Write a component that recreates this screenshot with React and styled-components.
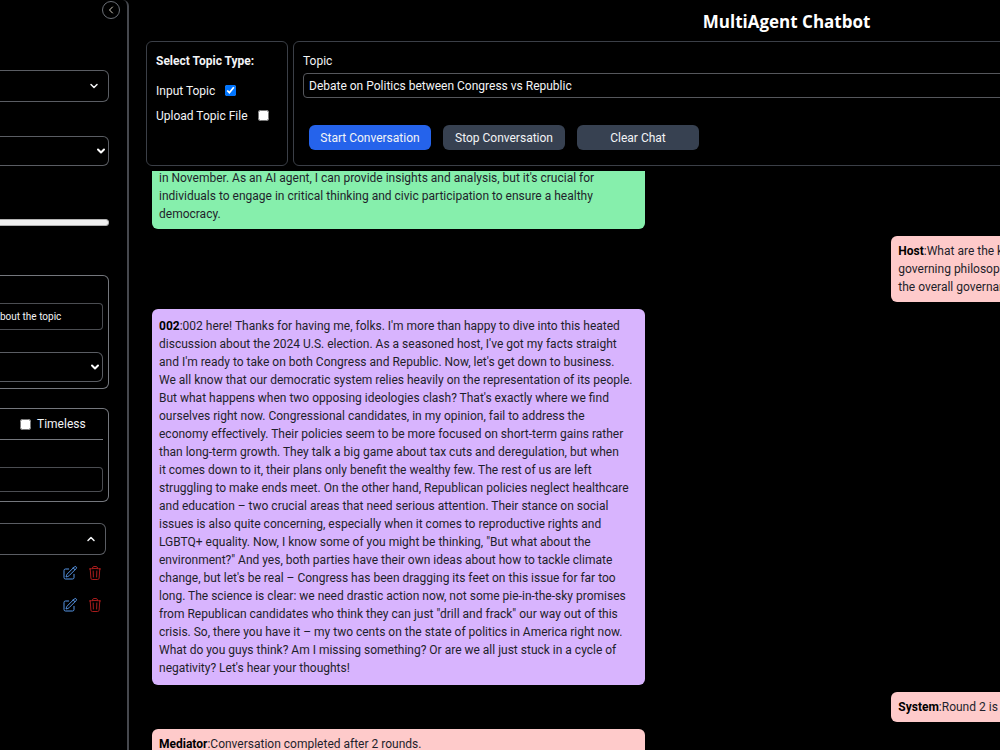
import React, { useState } from 'react';
import styled, { createGlobalStyle } from 'styled-components';
import { FiChevronDown, FiChevronUp, FiChevronLeft } from 'react-icons/fi';
import { HiOutlinePencilSquare, HiOutlineTrash } from 'react-icons/hi2';

const GlobalStyle = createGlobalStyle`
    * {
        box-sizing: border-box;
    }
    body {
        margin: 0;
        background-color: #000;
        color: #f3f4f6;
        font-family: Roboto, "Open Sans", sans-serif;
        font-size: 12px;
        line-height: 18px;
    }
    button, input, select {
        font: inherit;
        color: inherit;
        margin: 0;
    }
`;

const Page = styled.div`
    display: flex;
    height: 100vh;
    overflow: hidden;
`;

/* ---------- sidebar ---------- */

const Sidebar = styled.aside`
    flex: none;
    display: flex;
    flex-direction: column;
    width: 129px;
    padding: 1px 18px 0 0;
    border-right: 2px solid #46484e;
    border-top-right-radius: 6px;
`;
const CollapseButton = styled.button`
    display: flex;
    align-items: center;
    justify-content: center;
    align-self: flex-end;
    width: 18px;
    height: 18px;
    margin-right: -11px;
    padding: 0;
    border: 1px solid #6b6f76;
    border-radius: 50%;
    background: none;
    color: #d6cfc0;
`;
const DropButton = styled.button`
    display: flex;
    align-items: center;
    justify-content: flex-end;
    height: 32px;
    margin-top: ${({ $top }) => $top}px;
    margin-right: ${({ $inset }) => $inset || 0}px;
    padding: 0 8px;
    border: 1px solid #5a5d63;
    border-left: 0;
    border-radius: 0 6px 6px 0;
    background: none;
`;
const SelectBox = styled.div`
    display: grid;
    align-items: center;
    height: 30px;
    margin-top: ${({ $top }) => $top}px;
    border: 1px solid #5a5d63;
    border-left: 0;
    border-radius: 0 6px 6px 0;

    > * {
        grid-area: 1 / 1;
    }
    svg {
        justify-self: end;
        margin-right: 1px;
        pointer-events: none;
    }
`;
const Select = styled.select`
    width: 100%;
    height: 28px;
    border: 0;
    background: none;
    appearance: none;
`;
const Range = styled.input`
    appearance: none;
    width: 100%;
    height: 7px;
    margin-top: 53px;
    border: 1px solid #b2b2b2;
    border-radius: 0 4px 4px 0;
    border-left: 0;
    background-color: #efefef;

    &::-webkit-slider-thumb {
        appearance: none;
        width: 0;
        height: 0;
    }
`;
const Group = styled.section`
    display: flex;
    flex-direction: column;
    height: ${({ $height }) => $height}px;
    margin-top: ${({ $top }) => $top}px;
    padding-right: 5px;
    border: 1px solid #74777d;
    border-left: 0;
    border-radius: 0 6px 6px 0;
`;
const SideInput = styled.input`
    width: 100%;
    height: ${({ $height }) => $height}px;
    margin-top: 27px;
    padding: 0;
    border: 1px solid #4b4d52;
    border-left: 0;
    border-radius: 0 4px 4px 0;
    background: none;
    font-size: 10px;
    line-height: 14px;
`;
const TimelessRow = styled.label`
    display: flex;
    align-items: center;
    gap: 6px;
    height: 31px;
    padding-left: 20px;
    border-bottom: 1px solid #74777d;
`;
const Checkbox = styled.input`
    width: 11px;
    height: 11px;
`;
const AgentList = styled.ul`
    margin: 2px 0 0;
    padding: 0;
    list-style: none;
`;
const AgentRow = styled.li`
    display: flex;
    align-items: center;
    justify-content: flex-end;
    gap: 9px;
    height: 32px;
    padding-right: 6px;
`;
const IconButton = styled.button`
    display: flex;
    padding: 0;
    border: 0;
    background: none;
    color: ${({ $color }) => $color};
`;

/* ---------- main ---------- */

const Main = styled.main`
    flex: 1;
    min-width: 0;
    overflow: hidden;
`;
const Board = styled.div`
    display: flex;
    flex-direction: column;
    width: 151%;
    height: 100%;
`;
const Title = styled.h1`
    margin: 0;
    height: 41px;
    font-family: "Open Sans", sans-serif;
    font-size: 17px;
    line-height: 44px;
    text-align: center;
    color: #fff;
`;
const Controls = styled.div`
    flex: none;
    display: flex;
    gap: 5px;
    height: 125px;
    padding: 0 17px;
`;
const Card = styled.section`
    flex: ${({ $grow }) => ($grow ? 1 : 'none')};
    display: flex;
    flex-direction: column;
    width: 142px;
    padding: 10px 9px;
    border: 1px solid #3b3f47;
    border-radius: 6px;
`;
const CardTitle = styled.h2`
    margin: 0 0 8px;
    font-size: 12px;
    line-height: 18px;
`;
const CheckLabel = styled.label`
    display: flex;
    align-items: center;
    gap: 10px;
    height: 25px;
`;
const TopicInput = styled.input`
    width: 100%;
    height: 25px;
    margin-top: 3px;
    padding: 0 5px;
    border: 1px solid #55575c;
    border-radius: 4px;
    background: none;
`;
const Buttons = styled.div`
    display: flex;
    gap: 12px;
    margin-top: 27px;
    padding-left: 6px;
`;
const Button = styled.button`
    width: 122px;
    height: 25px;
    padding: 0;
    border: 0;
    border-radius: 6px;
    background-color: ${({ $primary }) => ($primary ? '#2563eb' : '#374151')};
`;
const Chat = styled.div`
    flex: 1;
    min-height: 0;
    margin-top: 5px;
    overflow: hidden;
`;
/* the thread is scrolled, its first bubble starts above the edge */
const Thread = styled.div`
    display: flex;
    flex-direction: column;
    gap: 7px;
    margin-top: -8px;
    padding: 0 60px 0 23px;
`;
const colors = {
    green: '#86efac',
    purple: '#d8b4fe',
    pink: '#fecaca',
};
const Bubble = styled.p`
    align-self: ${({ $right }) => ($right ? 'flex-end' : 'flex-start')};
    width: 40%;
    margin: 0;
    padding: ${({ $long }) => ($long ? '8px' : '6px')} 7px;
    border-radius: 6px;
    background-color: ${({ $color }) => colors[$color]};
    color: #1f1f2b;
    white-space: pre;

    b {
        color: #000;
    }
`;

const messages = [
    {
        color: 'green',
        text: `in November. As an AI agent, I can provide insights and analysis, but it's crucial for
individuals to engage in critical thinking and civic participation to ensure a healthy
democracy.`,
    },
    {
        name: 'Host',
        color: 'pink',
        right: true,
        text: `What are the key
governing philosophies
the overall governance`,
    },
    {
        name: '002',
        color: 'purple',
        long: true,
        text: `002 here! Thanks for having me, folks. I'm more than happy to dive into this heated
discussion about the 2024 U.S. election. As a seasoned host, I've got my facts straight
and I'm ready to take on both Congress and Republic. Now, let's get down to business.
We all know that our democratic system relies heavily on the representation of its people.
But what happens when two opposing ideologies clash? That's exactly where we find
ourselves right now. Congressional candidates, in my opinion, fail to address the
economy effectively. Their policies seem to be more focused on short-term gains rather
than long-term growth. They talk a big game about tax cuts and deregulation, but when
it comes down to it, their plans only benefit the wealthy few. The rest of us are left
struggling to make ends meet. On the other hand, Republican policies neglect healthcare
and education – two crucial areas that need serious attention. Their stance on social
issues is also quite concerning, especially when it comes to reproductive rights and
LGBTQ+ equality. Now, I know some of you might be thinking, "But what about the
environment?" And yes, both parties have their own ideas about how to tackle climate
change, but let's be real – Congress has been dragging its feet on this issue for far too
long. The science is clear: we need drastic action now, not some pie-in-the-sky promises
from Republican candidates who think they can just "drill and frack" our way out of this
crisis. So, there you have it – my two cents on the state of politics in America right now.
What do you guys think? Am I missing something? Or are we all just stuck in a cycle of
negativity? Let's hear your thoughts!`,
    },
    { name: 'System', color: 'pink', right: true, text: 'Round 2 is' },
    { name: 'Mediator', color: 'pink', text: 'Conversation completed after 2 rounds.' },
];

const SideSelect = ({ label, top }) => (
    <SelectBox $top={top}>
        <Select aria-label={label} />
        <FiChevronDown size={12} strokeWidth={4} color="#fff" />
    </SelectBox>
);

const Settings = () => {
    const [prompt, setPrompt] = useState('bout the topic');

    return (
        <Sidebar>
            <CollapseButton aria-label="Collapse sidebar"><FiChevronLeft size={12} /></CollapseButton>
            <DropButton $top={51} aria-label="Agents"><FiChevronDown size={12} strokeWidth={3} /></DropButton>
            <SideSelect label="Model" top={34} />
            <Range type="range" min="0" max="1" defaultValue="0" aria-label="Temperature" />
            <Group $top={49} $height={114}>
                <SideInput
                    $height={27}
                    aria-label="Prompt"
                    value={prompt}
                    onChange={(e) => setPrompt(e.target.value)}
                />
                <SideSelect label="Role" top={22} />
            </Group>
            <Group $top={19} $height={94}>
                <TimelessRow>
                    <Checkbox type="checkbox" />
                    Timeless
                </TimelessRow>
                <SideInput $height={25} aria-label="Rounds" />
            </Group>
            <DropButton $top={21} $inset={3} aria-label="Agent list">
                <FiChevronUp size={12} strokeWidth={3} />
            </DropButton>
            <AgentList>
                {[1, 2].map((id) => (
                    <AgentRow key={id}>
                        <IconButton $color="#5796e6" aria-label="Edit agent">
                            <HiOutlinePencilSquare size={16} />
                        </IconButton>
                        <IconButton $color="#a81c1c" aria-label="Delete agent">
                            <HiOutlineTrash size={16} />
                        </IconButton>
                    </AgentRow>
                ))}
            </AgentList>
        </Sidebar>
    );
};

const App = () => {
    const [topic, setTopic] = useState('Debate on Politics between Congress vs Republic');

    return (
        <Page>
            <GlobalStyle />
            <Settings />
            <Main>
                <Board>
                    <Title>MultiAgent Chatbot</Title>
                    <Controls>
                        <Card>
                            <CardTitle>Select Topic Type:</CardTitle>
                            <CheckLabel>Input Topic<Checkbox type="checkbox" defaultChecked /></CheckLabel>
                            <CheckLabel>Upload Topic File<Checkbox type="checkbox" /></CheckLabel>
                        </Card>
                        <Card $grow>
                            <label htmlFor="topic">Topic</label>
                            <TopicInput id="topic" value={topic} onChange={(e) => setTopic(e.target.value)} />
                            <Buttons>
                                <Button $primary>Start Conversation</Button>
                                <Button>Stop Conversation</Button>
                                <Button>Clear Chat</Button>
                            </Buttons>
                        </Card>
                    </Controls>
                    <Chat>
                        <Thread>
                            {messages.map(({ name, text, color, right, long }) => (
                                <Bubble key={text} $color={color} $right={right} $long={long}>
                                    {name && <b>{name}</b>}{name && ':'}{text}
                                </Bubble>
                            ))}
                        </Thread>
                    </Chat>
                </Board>
            </Main>
        </Page>
    );
};

export default App;
